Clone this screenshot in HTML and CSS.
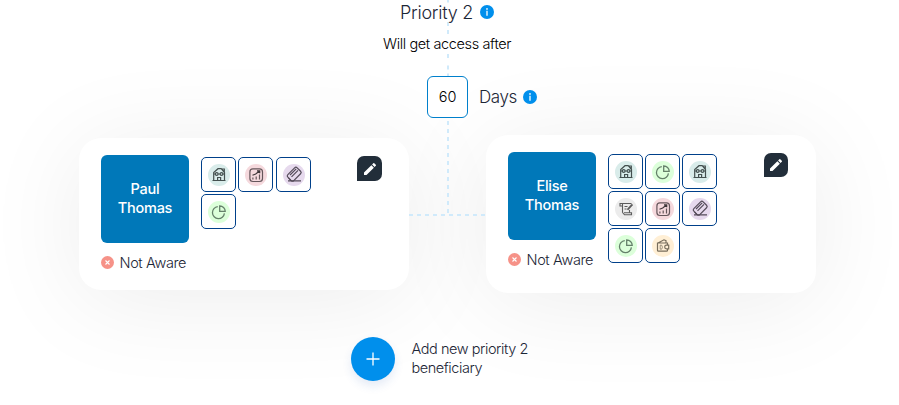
FILE: index.html
```html
<!DOCTYPE html>
<html lang="en">
<head>
<meta charset="utf-8">
<title>Beneficiaries</title>
<link rel="stylesheet" href="styles.css">
</head>
<body>
<svg class="defs" width="0" height="0">
  <symbol id="info" viewBox="0 0 13 13"><circle cx="6.5" cy="6.5" r="6.5" fill="#008fec"/><path d="M6.5 5.4v4.500" stroke="#fff" stroke-width="1.2"/><circle cx="6.5" cy="3.6" r=".8" fill="#fff"/></symbol>
  <symbol id="cross" viewBox="0 0 13 13"><circle cx="6.5" cy="6.5" r="6.5" fill="#f69288"/><path d="M4.500 4.500l4 4m0-4l-4 4" stroke="#fff" stroke-width="1.100"/></symbol>
  <symbol id="pencil" viewBox="0 0 24 24"><path fill="#fff" d="M3 17.25V21h3.75L17.81 9.94l-3.75-3.75L3 17.25zM20.71 7.04a1 1 0 0 0 0-1.41l-2.34-2.34a1 1 0 0 0-1.41 0l-1.83 1.83 3.75 3.75 1.83-1.83z"/></symbol>
  <symbol id="house" viewBox="0 0 22 22"><circle cx="11" cy="11" r="11" fill="#d9ecea"/><g fill="none" stroke="#44504f" stroke-width="1.200"><path d="M5.700 16.500V8.500L10 4.700h3.200l3.300 3.800v8M4.500 16.500h13M14 5h2.300v3.200M9.600 16.500v-3h3v3"/><circle cx="8.700" cy="10" r="1.400"/><circle cx="13.500" cy="10" r="1.400"/><path d="M5.700 10h1.600M10.100 10h2M14.900 10h1.600"/></g></symbol>
  <symbol id="chart" viewBox="0 0 22 22"><circle cx="11" cy="11" r="11" fill="#f5d9dd"/><g fill="none" stroke="#65565b" stroke-width="1.200"><rect x="4.900" y="4.900" width="12.600" height="12.600" rx="3"/><path d="M7.900 15.500v-2M11.200 15.500v-3M14.500 15.500v-5"/><path d="M7.500 11.200l3.200-1.200 3.800-3M12 6.800h2.700v2.500" stroke="#3f3639"/></g></symbol>
  <symbol id="card" viewBox="0 0 22 22"><circle cx="11" cy="11" r="11" fill="#e6d9ed"/><g fill="none" stroke="#544b59" stroke-width="1.200"><rect x="4.600" y="6" width="13.200" height="8.400" rx="1.800" transform="rotate(-45 11.200 10.200)"/><path d="M7 11l6.200-6.200M8.500 12.800l6.500-6.500M5 16.900h13M5.500 13.800l2.700 3"/></g></symbol>
  <symbol id="pie" viewBox="0 0 22 22"><circle cx="11" cy="11" r="11" fill="#dcffda"/><g fill="none" stroke="#65806a" stroke-width="1.300"><path d="M9.800 5.600A6 6 0 1 0 16.400 12.300M11.700 5v5.300h5.500C17.200 7.200 14.700 5 11.700 5z"/></g></symbol>
  <symbol id="scroll" viewBox="0 0 22 22"><circle cx="11" cy="11" r="11" fill="#ececec"/><g fill="none" stroke="#5c5c5c" stroke-width="1.100"><path d="M5 5.500h11.500M5 5v3h2.500M7.500 5.500v9M14.500 12v3M9 14.800h7.500v2H9.500L7.500 14.500M9.500 8.500h3M9.500 11h2"/><path d="M12 11.300l4.700-5.300 1.100 1-4.500 5z" fill="#5c5c5c" stroke-width=".5"/></g></symbol>
  <symbol id="wallet" viewBox="0 0 22 22"><circle cx="11" cy="11" r="11" fill="#ffefd5"/><g fill="none" stroke="#776d5c" stroke-width="1.200"><path d="M15.500 10V8H5.500v7.200q0 1 1 1h8q1 0 1-1v-1.400M6 8l6-3.200 2 .8V8M16.700 10.200h-2.200a1.700 1.700 0 0 0 0 3.600h2.200z"/><path d="M8.200 10.200v4h1.500q1.500-2 0-4z" stroke-width=".7"/></g></symbol>
</svg>
<main class="page">
  <svg class="links" width="899" height="405" fill="none" stroke="#d0eafb" stroke-width="2"><path d="M448 0v2.500M448 22v4M448 30v4M448 54v4M448 65.500v4M448 73.500V76"/><path d="M448 121V214" stroke-dasharray="4 4"/><path d="M409 215H486" stroke-dasharray="4 4"/></svg>
  <h1 class="title"><span>Priority 2</span><svg class="info"><use href="#info"/></svg></h1>
  <p class="after">Will get access after</p>
  <div class="delay"><span class="number">60</span><span class="unit">Days</span><svg class="info"><use href="#info"/></svg></div>
  <section class="people">
    <article class="person">
      <div class="identity"><div class="name">Paul<br>Thomas</div><div class="status"><svg class="cross"><use href="#cross"/></svg><span>Not Aware</span></div></div>
      <div class="assets"><i><svg><use href="#house"/></svg></i><i><svg><use href="#chart"/></svg></i><i><svg><use href="#card"/></svg></i><i><svg><use href="#pie"/></svg></i></div>
      <button class="edit" aria-label="Edit"><svg><use href="#pencil"/></svg></button>
    </article>
    <article class="person tall">
      <div class="identity"><div class="name">Elise<br>Thomas</div><div class="status"><svg class="cross"><use href="#cross"/></svg><span>Not Aware</span></div></div>
      <div class="assets"><i><svg><use href="#house"/></svg></i><i><svg><use href="#pie"/></svg></i><i><svg><use href="#house"/></svg></i><i><svg><use href="#scroll"/></svg></i><i><svg><use href="#chart"/></svg></i><i><svg><use href="#card"/></svg></i><i><svg><use href="#pie"/></svg></i><i><svg><use href="#wallet"/></svg></i></div>
      <button class="edit" aria-label="Edit"><svg><use href="#pencil"/></svg></button>
    </article>
  </section>
  <div class="add"><button class="plus" aria-label="Add"><svg viewBox="0 0 14 14"><path d="M7 .5v13M.5 7h13" stroke="#fff" stroke-width="1.300"/></svg></button><span>Add new priority 2<br>beneficiary</span></div>
</main>
</body>
</html>
```
FILE: styles.css
```css
* { box-sizing: border-box; }
body { margin: 0; background: #fff; color: #1c2636; font-family: Inter, sans-serif; font-size: 14.5px; font-weight: 300; letter-spacing: -.37px; overflow: hidden; }
svg { display: block; }
.defs { position: absolute; }
.page { position: relative; width: 899px; height: 405px; display: flex; flex-direction: column; overflow: hidden; }
.links { position: absolute; left: 0; top: 0; z-index: 1; pointer-events: none; }
.title, .after, .delay, .add { z-index: 2; }
.title { display: flex; align-items: center; height: 24px; margin: 0 0 0 400px; font-size: 18px; font-weight: 300; line-height: 24px; letter-spacing: -.25px; }
.title span { width: 80px; padding-top: 1px; }
.info { width: 14px; height: 14px; }
.after { margin: 10px 0 0 383px; color: #000; line-height: 20px; }
.delay { display: flex; align-items: center; height: 42px; margin: 22px 0 0 427px; }
.number { display: flex; align-items: center; justify-content: center; width: 41px; height: 42px; padding-bottom: 1px; border: 1px solid #0080cc; border-radius: 6px; background: #fff; color: #000; letter-spacing: 0; }
.unit { width: 44px; margin-left: 11px; font-size: 17px; letter-spacing: -.4px; }
.people { display: flex; align-items: center; gap: 77px; height: 158px; margin: 17px 0 0 79px; }
.person { display: flex; width: 330px; height: 152px; padding: 17px 27px 0 22px; border-radius: 22px; background: #fff; box-shadow: 0 10px 100px rgba(0, 0, 0, .075); }
.tall { height: 158px; }
.identity { width: 100px; }
.name { display: flex; align-items: center; justify-content: center; width: 88px; height: 88px; padding-bottom: 2px; border-radius: 6px; background: #0078b9; color: #fff; font-weight: 500; line-height: 19px; letter-spacing: -.25px; text-align: center; }
.status { display: flex; align-items: center; gap: 5.5px; height: 20px; margin-top: 9px; white-space: nowrap; }
.cross { width: 13px; height: 13px; }
.assets { display: grid; grid-template-columns: 35px 35px 36px; grid-auto-rows: 35px; gap: 2px; margin-top: 2px; align-content: start; }
.person:not(.tall) .assets i:nth-child(3) { margin: 0 0 0 1px; }
.tall .assets { grid-template-columns: repeat(3, 35px); }
.assets i { display: flex; align-items: center; justify-content: center; border: 1px solid #00408a; border-radius: 5px; }
.assets i svg { width: 22px; height: 22px; }
.edit { display: flex; align-items: center; justify-content: center; width: 25px; height: 25px; margin: 1px 0 0 auto; padding: 0; border: 0; border-radius: 7px 7px 7px 0; background: #222e3a; }
.tall .edit { width: 24px; height: 24px; margin-right: 1px; }
.edit svg { width: 16px; height: 16px; }
.add { display: flex; align-items: center; margin: 44px 0 0 351px; line-height: 19px; }
.add span { margin-left: 16.5px; padding-bottom: 2px; letter-spacing: -.44px; }
.plus { display: flex; align-items: center; justify-content: center; width: 44px; height: 44px; padding: 0; border: 0; border-radius: 50%; background: #008fec; box-shadow: 0 5px 10px rgba(40, 90, 180, .12); }
.plus svg { width: 14px; height: 14px; }
```
